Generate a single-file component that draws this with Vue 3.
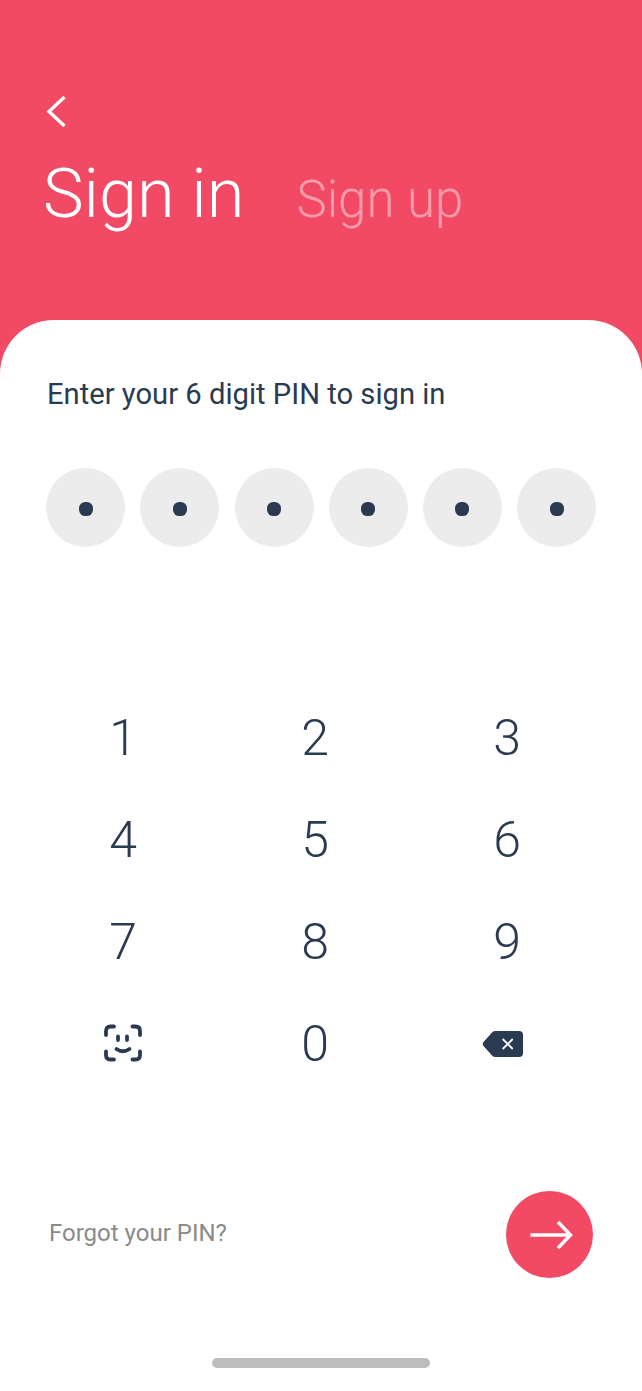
<template>
  <div class="screen">
    <header class="hero">
      <button class="back" aria-label="Back">
        <svg width="24" height="34" viewBox="0 0 24 34">
          <path d="M21.500 3 L6 17.500 L21.500 32" fill="none" stroke="#fff" stroke-width="3.400" />
        </svg>
      </button>
      <div class="tabs">
        <span class="tab active">Sign in</span>
        <span class="tab">Sign up</span>
      </div>
    </header>

    <main class="sheet">
      <p class="prompt">Enter your 6 digit PIN to sign in</p>

      <div class="pin">
        <div v-for="n in 6" :key="n" class="pin-cell"><i class="pin-dot"></i></div>
      </div>

      <div class="keypad">
        <button v-for="k in digits" :key="k" class="key">{{ k }}</button>
        <button class="key" aria-label="Face ID">
          <svg width="40" height="40" viewBox="0 0 40 40" fill="none" stroke="#2a3a50" stroke-width="3.800" stroke-linecap="round">
            <path d="M3 11 V7 Q3 2.500 7.500 2.500 H11" />
            <path d="M29.500 2.500 H32.500 Q37 2.500 37 7 V11" />
            <path d="M3 27.500 V31 Q3 35.500 7.500 35.500 H11" />
            <path d="M29.500 35.500 H32.500 Q37 35.500 37 31 V27.500" />
            <path d="M15 12.500 V16" />
            <path d="M24 12.500 V16" />
            <path d="M13.500 25 Q20 29.500 26.500 25" />
          </svg>
        </button>
        <button class="key">0</button>
        <button class="key key-del" aria-label="Delete">
          <svg width="42" height="30" viewBox="0 0 42 30">
            <path d="M13 2 H37 Q41 2 41 6 V24 Q41 28 37 28 H13 Q11.500 28 10.500 27 L1.500 17 Q0 15 1.500 13 L10.500 3 Q11.500 2 13 2 Z" fill="#2a3a50" />
            <path d="M20.700 10 L30.700 20 M30.700 10 L20.700 20" stroke="#fff" stroke-width="1.800" />
          </svg>
        </button>
      </div>

      <div class="footer">
        <span class="forgot">Forgot your PIN?</span>
        <button class="go" aria-label="Continue">
          <svg width="46" height="32" viewBox="0 0 46 32" fill="none" stroke="#fff" stroke-width="3.400">
            <path d="M3.500 16 H43.500" />
            <path d="M31 3 L43.500 16 L31 29" />
          </svg>
        </button>
      </div>

      <div class="home-bar"></div>
    </main>
  </div>
</template>

<script setup>
const digits = [1, 2, 3, 4, 5, 6, 7, 8, 9]
</script>

<style>
html, body {
  margin: 0;
  background: #fff;
}
</style>

<style scoped>
.screen {
  width: 642px;
  height: 1391px;
  overflow: hidden;
  background: #f24965;
  font-family: Roboto, "Liberation Sans", sans-serif;
  display: flex;
  flex-direction: column;
}
button {
  border: none;
  background: none;
  padding: 0;
  font-family: inherit;
}
.hero {
  height: 320px;
  box-sizing: border-box;
  padding: 94px 0 0 43px;
}
.back {
  display: block;
  width: 24px;
  height: 34px;
}
.tabs {
  display: flex;
  align-items: baseline;
  gap: 52px;
  margin-top: 36px;
}
.tab {
  font-size: 51px;
  font-weight: 300;
  line-height: 60px;
  color: rgba(255, 255, 255, 0.45);
}
.tab.active {
  font-size: 68.500px;
  color: #fff;
}
.sheet {
  flex: 1;
  background: #fff;
  border-radius: 54px 54px 0 0;
  display: flex;
  flex-direction: column;
}
.prompt {
  margin: 56px 0 0 47px;
  font-size: 29.200px;
  line-height: 36px;
  color: #2a3a50;
}
.pin {
  display: flex;
  justify-content: space-between;
  margin: 56px 46px 0 46.300px;
}
.pin-cell {
  width: 79px;
  height: 79px;
  border-radius: 50%;
  background: #ececec;
  display: flex;
  align-items: center;
  justify-content: center;
}
.pin-dot {
  width: 14px;
  height: 14px;
  border-radius: 45%;
  background: #2a3a50;
  margin-top: 3px;
}
.keypad {
  display: grid;
  grid-template-columns: repeat(3, 192px);
  grid-auto-rows: 102px;
  margin: 140px 0 0 27px;
}
.key {
  font-size: 50px;
  font-weight: 300;
  color: #2a3a50;
  display: flex;
  align-items: center;
  justify-content: center;
}
.key-del {
  padding-right: 8px;
}
.footer {
  display: flex;
  align-items: center;
  justify-content: space-between;
  margin: 96px 49px 0 49px;
}
.forgot {
  font-size: 24px;
  color: #8a8a8a;
  margin-bottom: 4px;
}
.go {
  width: 87px;
  height: 87px;
  border-radius: 50%;
  background: #f24965;
  display: flex;
  align-items: center;
  justify-content: center;
}
.home-bar {
  width: 218px;
  height: 10px;
  border-radius: 5px;
  background: #bdbdbd;
  margin: 80px auto 0;
}
</style>
